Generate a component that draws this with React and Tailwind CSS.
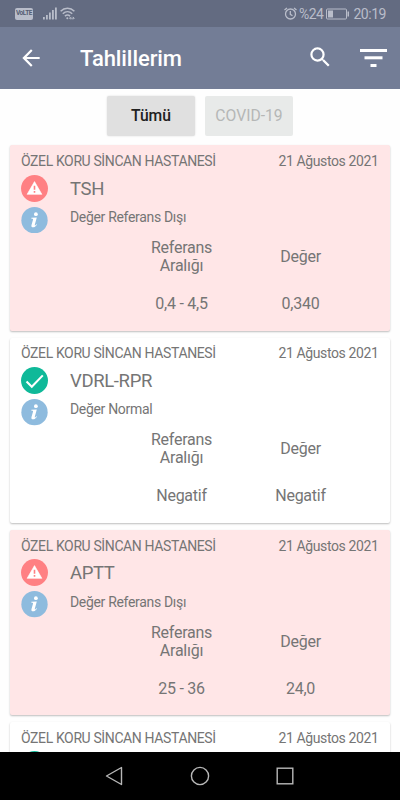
import React, { useState } from 'react';

const results = [
    { id: 1, hospital: 'ÖZEL KORU SİNCAN HASTANESİ', date: '21 Ağustos 2021', normal: false, name: 'TSH', status: 'Değer Referans Dışı', range: '0,4 - 4,5', value: '0,340' },
    { id: 2, hospital: 'ÖZEL KORU SİNCAN HASTANESİ', date: '21 Ağustos 2021', normal: true, name: 'VDRL-RPR', status: 'Değer Normal', range: 'Negatif', value: 'Negatif' },
    { id: 3, hospital: 'ÖZEL KORU SİNCAN HASTANESİ', date: '21 Ağustos 2021', normal: false, name: 'APTT', status: 'Değer Referans Dışı', range: '25 - 36', value: '24,0' },
    { id: 4, hospital: 'ÖZEL KORU SİNCAN HASTANESİ', date: '21 Ağustos 2021', normal: true },
];

const StatusBar = () => (
    <div className="flex h-[27px] shrink-0 items-center bg-[#636b81] pl-[15px] pr-[14px] text-[#b9bdca]">
        <div className="flex h-[12px] w-[18px] shrink-0 items-center justify-center rounded-[2px] bg-[#b9bdca]">
            <span className="text-[6.5px] font-bold leading-none tracking-[-0.4px] text-[#555d73]">VoLTE</span>
        </div>
        <svg className="ml-[10px]" width="14" height="13" viewBox="0 0 14 13" fill="currentColor">
            <rect x="0" y="10" width="1.8" height="2.5" />
            <rect x="3" y="8" width="1.8" height="4.5" />
            <rect x="6" y="5.5" width="1.8" height="7" />
            <rect x="9" y="3" width="1.8" height="9.5" />
            <rect x="12" y="0.5" width="1.8" height="12" />
        </svg>
        <svg className="ml-[3px]" width="16" height="13" viewBox="0 0 16 13" fill="none" stroke="currentColor" strokeWidth="1.5">
            <path d="M0.6 4.2C4.6 0.2 10.4 0.2 14.4 4.2" />
            <path d="M2.8 6.8C5.6 4.1 9.4 4.1 12.2 6.8" />
            <path d="M4.9 9.1C6.6 7.6 8.4 7.6 10.1 9.1" />
            <circle cx="7.3" cy="11.3" r="1" fill="currentColor" stroke="none" />
            <path d="M9.6 11.2h4.6M10.9 9.9l-1.3 1.3 1.3 1.3M12.9 9.9l1.3 1.3-1.3 1.3" strokeWidth="0.9" />
        </svg>
        <div className="ml-auto flex items-center">
            <svg width="13" height="13" viewBox="0 0 13 13" fill="none" stroke="currentColor" strokeWidth="1.3">
                <circle cx="6.5" cy="7" r="5" />
                <path d="M6.3 4v3.3l2.2 1.5M0.5 3L3 0.9M12.5 3L10 0.9" />
            </svg>
            <span className="ml-[2px] text-[14px] leading-none tracking-[-0.5px]">%24</span>
            <svg className="ml-[3px]" width="24" height="12" viewBox="0 0 24 12" fill="none">
                <rect x="0.5" y="1" width="20" height="10" rx="1" stroke="currentColor" />
                <rect x="2" y="2.5" width="5" height="7" fill="currentColor" />
                <rect x="21.5" y="3.5" width="1.5" height="5" fill="currentColor" />
            </svg>
            <span className="ml-[3px] text-[14px] leading-none tracking-[-0.45px]">20:19</span>
        </div>
    </div>
);

const AppBar = () => (
    <div className="flex h-[62px] shrink-0 items-center bg-[#737d96] pl-[18px] pr-[13px] text-white">
        <svg width="26" height="26" viewBox="0 0 24 24" fill="currentColor">
            <path d="M20 11H7.83l5.59-5.59L12 4l-8 8 8 8 1.41-1.41L7.83 13H20v-2z" />
        </svg>
        <h1 className="ml-[36px] pt-[2px] text-[22px] font-medium leading-none tracking-[-0.08px]">Tahlillerim</h1>
        <svg className="mb-[1px] ml-auto" width="26.5" height="26.5" viewBox="0 0 24 24" fill="currentColor">
            <path d="M15.5 14h-.79l-.28-.27A6.471 6.471 0 0 0 16 9.5 6.5 6.5 0 1 0 9.5 16c1.61 0 3.09-.59 4.23-1.57l.27.28v.79l5 4.99L20.49 19l-4.99-5zm-6 0C7.01 14 5 11.99 5 9.5S7.01 5 9.5 5 14 7.01 14 9.5 11.99 14 9.5 14z" />
        </svg>
        <svg className="ml-[27px]" width="27" height="18" viewBox="0 0 27 18" fill="currentColor">
            <rect x="0" y="0" width="27" height="3" />
            <rect x="4.5" y="7.3" width="18" height="3" />
            <rect x="10.5" y="15" width="6" height="3" />
        </svg>
    </div>
);

const StateIcon = ({ normal }) => {
    if (normal) {
        return (
            <svg width="27" height="27" viewBox="0 0 27 27">
                <circle cx="13.5" cy="13.5" r="13.5" fill="#0fb999" />
                <path d="M5.5 14.5l5.3 5.2L21.8 8.4" fill="none" stroke="#fff" strokeWidth="2.1" />
            </svg>
        );
    }
    return (
        <svg width="27" height="27" viewBox="0 0 27 27">
            <circle cx="13.5" cy="13.5" r="13.5" fill="#ff8083" />
            <path d="M13.5 6.6L20.9 19.4H6.1z" fill="#fff" stroke="#fff" strokeWidth="0.6" strokeLinejoin="round" />
            <path d="M12.7 10.8h1.6v4.1h-1.6zM12.7 16.1h1.6v1.6h-1.6z" fill="#ff8083" />
        </svg>
    );
};

const InfoIcon = () => (
    <svg width="27" height="27" viewBox="0 0 27 27">
        <circle cx="13.5" cy="13.2" r="13.2" fill="#8ebbde" />
        <circle cx="14.9" cy="7.2" r="1.9" fill="#fff" />
        <path d="M10.4 10.9l5.4-.5-2 7.3c-.2.8.2.9.7.5l1-.9.5.5c-1.3 1.7-2.6 2.6-3.9 2.6-1.5 0-2-.9-1.6-2.3l1.5-5.3c.2-.7-.1-1-.8-1.1l-1-.1z" fill="#fff" />
    </svg>
);

const ResultCard = ({ result }) => (
    <div className={`h-[185.3px] shrink-0 rounded-[2px] px-[11.5px] pt-[6.6px] text-[#757575] shadow-[0_1px_2px_rgba(0,0,0,0.26)] ${result.normal ? 'bg-white' : 'bg-[#ffe6e7]'}`}>
        <div className="flex h-[18px] items-center justify-between text-[14px] leading-none tracking-[-0.38px]">
            <span>{result.hospital}</span>
            <span>{result.date}</span>
        </div>
        <div className="mt-[4.6px] flex h-[58.9px] gap-[22px]">
            <div className="flex flex-col gap-[5px]">
                <StateIcon normal={result.normal} />
                <InfoIcon />
            </div>
            {result.name && (
                <div>
                    <h2 className="flex h-[29px] items-center text-[18.5px] leading-none tracking-[-0.36px]">{result.name}</h2>
                    <p className="flex h-[27px] items-center text-[14px] leading-none tracking-[-0.32px]">{result.status}</p>
                </div>
            )}
        </div>
        {result.name && (
            <div className="ml-[101px] grid w-[238px] grid-cols-2 text-center text-[16px] leading-[18px] tracking-[-0.25px]">
                <div className="flex h-[47px] items-center justify-center">
                    <span className="w-[70px]">Referans Aralığı</span>
                </div>
                <div className="flex h-[47px] items-center justify-center">Değer</div>
                <div className="flex h-[47px] items-center justify-center">{result.range}</div>
                <div className="flex h-[47px] items-center justify-center">{result.value}</div>
            </div>
        )}
    </div>
);

const NavBar = () => (
    <div className="flex h-[48px] shrink-0 items-center justify-center gap-[66px] bg-black pr-[2px]">
        <svg width="19" height="20" viewBox="0 0 19 20" fill="none" stroke="#b8b8b8" strokeWidth="1.4">
            <path d="M16.5 1.5v17L1.5 10z" strokeLinejoin="round" />
        </svg>
        <svg width="20" height="20" viewBox="0 0 20 20" fill="none" stroke="#b8b8b8" strokeWidth="1.4">
            <circle cx="10" cy="10" r="8.6" />
        </svg>
        <svg width="18" height="18" viewBox="0 0 18 18" fill="none" stroke="#b8b8b8" strokeWidth="1.4">
            <rect x="1.2" y="1.2" width="15.6" height="15.6" />
        </svg>
    </div>
);

export default function App() {
    const [filter, setFilter] = useState('all');

    const tabClass = (active) =>
        active
            ? 'bg-[#e0e0e0] font-medium text-[#212121] shadow-[0_0_2px_rgba(0,0,0,0.15)]'
            : 'bg-[#e8eae9] font-normal text-[#b5b7b6]';

    return (
        <div className="flex h-[800px] w-[400px] flex-col overflow-hidden bg-[#fefefe] font-[Roboto,sans-serif]">
            <StatusBar />
            <AppBar />
            <main className="flex min-h-0 flex-1 flex-col overflow-hidden">
                <div className="flex shrink-0 justify-center gap-[10px] pb-[9.4px] pt-[7px]">
                    <button
                        onClick={() => setFilter('all')}
                        className={`h-[40px] w-[88px] rounded-[2px] text-[15.7px] ${tabClass(filter === 'all')}`}
                    >
                        Tümü
                    </button>
                    <button
                        onClick={() => setFilter('covid')}
                        className={`h-[40px] w-[88px] rounded-[2px] text-[15.7px] ${tabClass(filter === 'covid')}`}
                    >
                        COVID-19
                    </button>
                </div>
                <div className="flex flex-col gap-[7px] pl-[9.5px] pr-[10px]">
                    {results.map((result) => (
                        <ResultCard key={result.id} result={result} />
                    ))}
                </div>
            </main>
            <NavBar />
        </div>
    );
}
